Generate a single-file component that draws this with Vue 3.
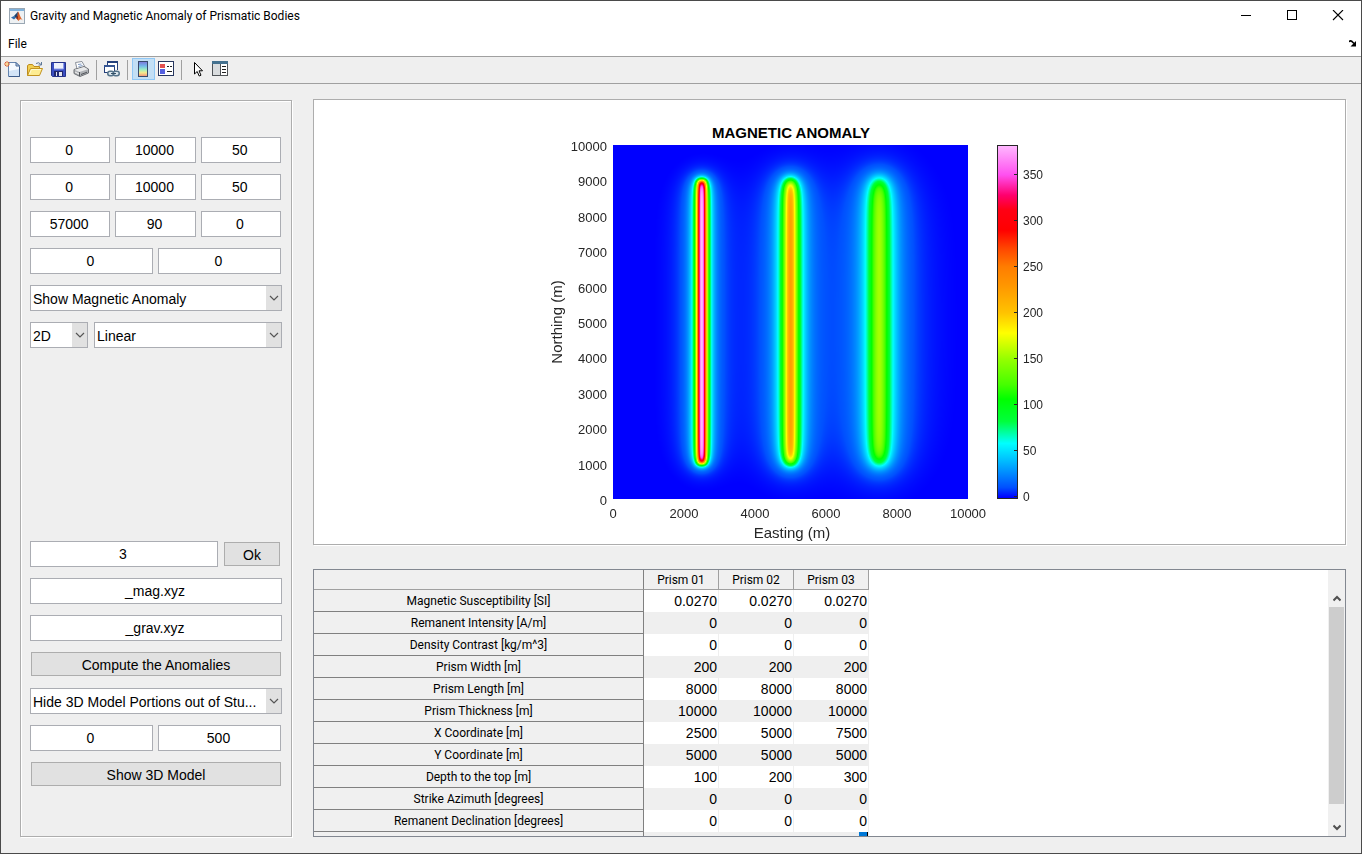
<script setup>
import { onMounted, ref } from 'vue'

const gridRows = [
  { key: 'x', label: 'Easting', values: ['0', '10000', '50'] },
  { key: 'y', label: 'Northing', values: ['0', '10000', '50'] },
  { key: 'f', label: 'Field', values: ['57000', '90', '0'] }
]

const prisms = [
  { name: 'Prism 01', x: 2500, depth: 100 },
  { name: 'Prism 02', x: 5000, depth: 200 },
  { name: 'Prism 03', x: 7500, depth: 300 }
]

const rows = [
  ['Magnetic Susceptibility [SI]', '0.0270', '0.0270', '0.0270'],
  ['Remanent Intensity [A/m]', '0', '0', '0'],
  ['Density Contrast [kg/m^3]', '0', '0', '0'],
  ['Prism Width [m]', '200', '200', '200'],
  ['Prism Length [m]', '8000', '8000', '8000'],
  ['Prism Thickness [m]', '10000', '10000', '10000'],
  ['X Coordinate [m]', '2500', '5000', '7500'],
  ['Y Coordinate [m]', '5000', '5000', '5000'],
  ['Depth to the top [m]', '100', '200', '300'],
  ['Strike Azimuth [degrees]', '0', '0', '0'],
  ['Remanent Declination [degrees]', '0', '0', '0'],
  ['', '', '', '']
]

const yTicks = Array.from({ length: 11 }, (_, i) => i * 1000)
const xTicks = Array.from({ length: 6 }, (_, i) => i * 2000)
const barTicks = [0, 50, 100, 150, 200, 250, 300, 350]
const LOW = -2
const HIGH = 382

const stops = [
  [-2, 0, 0, 255],
  [-1, 0, 0, 255],
  [10, 0, 80, 255],
  [22, 0, 125, 255],
  [38, 0, 185, 255],
  [58, 0, 255, 255],
  [82, 0, 255, 60],
  [106, 0, 255, 0],
  [122, 70, 255, 0],
  [150, 150, 255, 0],
  [178, 255, 255, 0],
  [200, 255, 195, 0],
  [230, 255, 150, 0],
  [250, 255, 125, 0],
  [270, 255, 70, 0],
  [290, 255, 0, 0],
  [312, 255, 0, 20],
  [328, 255, 0, 110],
  [350, 255, 80, 240],
  [382, 255, 185, 255]
]

function colour(v) {
  let i = 1
  while (i < stops.length - 1 && v > stops[i][0]) i++
  const a = stops[i - 1]
  const b = stops[i]
  const t = Math.min(1, Math.max(0, (v - a[0]) / (b[0] - a[0])))
  return [1, 2, 3].map((k) => Math.round(a[k] + (b[k] - a[k]) * t))
}

// Solid angle of a horizontal rectangle seen from the surface point (x, y)
function solid(x, y, cx, z) {
  let sum = 0
  for (const sx of [-1, 1]) {
    for (const sy of [-1, 1]) {
      const dx = cx + sx * 100 - x
      const dy = 5000 + sy * 4000 - y
      sum += sx * sy * Math.atan((dx * dy) / (z * Math.hypot(dx, dy, z)))
    }
  }
  return sum
}

function anomaly(x, y) {
  const c = (0.027 * 57000) / (4 * Math.PI)
  return prisms.reduce((s, p) => s + c * (solid(x, y, p.x, p.depth) - solid(x, y, p.x, p.depth + 10000)), 0)
}

const canvas = ref(null)
onMounted(() => {
  const el = canvas.value
  const ctx = el.getContext('2d')
  const img = ctx.createImageData(el.width, el.height)
  for (let j = 0; j < el.height; j++) {
    for (let i = 0; i < el.width; i++) {
      const x = ((i + 0.5) / el.width) * 10000
      const y = ((el.height - j - 0.5) / el.height) * 10000
      const k = (j * el.width + i) * 4
      const c = colour(anomaly(x, y))
      img.data[k] = c[0]
      img.data[k + 1] = c[1]
      img.data[k + 2] = c[2]
      img.data[k + 3] = 255
    }
  }
  ctx.putImageData(img, 0, 0)
})

const barY = (v) => 398 - Math.round(((v - LOW) / (HIGH - LOW)) * 353)
const barOffset = (v) => (v - LOW) / (HIGH - LOW)
</script>

<template>
  <div class="window">
    <header class="titlebar">
      <svg class="app-icon" width="16" height="16" viewBox="0 0 16 16" aria-hidden="true">
        <rect x="0.5" y="0.5" width="15" height="15" fill="#eef1f3" stroke="#9aa7b3" />
        <rect x="1" y="1" width="14" height="2" fill="#7fb2dc" />
        <path d="M2 9.500 L5 8 L7 9.800 L5 11.500 Z" fill="#2f6fb0" />
        <path d="M5 8 L9 3.500 L8.500 8.500 L7 10 Z" fill="#1d4470" />
        <path d="M9 3.500 C10.500 5 11 9.500 14 12.500 C12 10.800 11 11 9.500 13 C8.500 12 8 10.500 7 10 L8.500 8 Z" fill="#e0662a" />
        <path d="M9 3.500 C9.600 6 9 9.500 8.500 12 C8 11 7.500 10.300 7 10 L8.500 8 Z" fill="#7d1f16" />
      </svg>
      <h1>Gravity and Magnetic Anomaly of Prismatic Bodies</h1>
      <div class="win-buttons">
        <button type="button" aria-label="Minimize">
          <svg width="12" height="12" viewBox="0 0 12 12"><path d="M1 5.500 H11" stroke="#000" fill="none" /></svg>
        </button>
        <button type="button" aria-label="Maximize">
          <svg width="12" height="12" viewBox="0 0 12 12"><rect x="1.500" y="0.500" width="9" height="9" stroke="#000" fill="none" /></svg>
        </button>
        <button type="button" aria-label="Close">
          <svg width="12" height="12" viewBox="0 0 12 12"><path d="M1 0 L11 10 M11 0 L1 10" stroke="#000" stroke-width="1.100" fill="none" /></svg>
        </button>
      </div>
    </header>

    <nav class="menubar">
      <button type="button">File</button>
      <svg width="8" height="8" viewBox="0 0 8 8" aria-hidden="true">
        <path d="M0 2 Q1 0 3 1.500 L5 3.500" stroke="#000" stroke-width="1.600" fill="none" />
        <path d="M7 1 V6.500 H1.500 Z" fill="#000" />
      </svg>
    </nav>

    <div class="toolbar">
      <button type="button" aria-label="New figure">
        <svg width="16" height="16" viewBox="0 0 16 16">
          <path d="M4.500 1.500 H12 L15.500 5 V15.500 H4.500 Z" fill="#f4f9ff" stroke="#6484ae" />
          <path d="M5 10 L15 8 V15 H5 Z" fill="#d3e4f7" />
          <path d="M12 1.500 V5 H15.500 Z" fill="#b9cfe9" stroke="#4a6b98" />
          <path d="M15.500 6 V15.500 H5" stroke="#3d5c8b" fill="none" />
          <path d="M3 0 V6 M0 3 H6 M1 1 L5 5 M5 1 L1 5" stroke="#e0622e" />
          <circle cx="3" cy="3" r="1.300" fill="#ffd98a" />
        </svg>
      </button>
      <button type="button" aria-label="Open file">
        <svg width="16" height="16" viewBox="0 0 16 16">
          <path d="M9 2.500 Q12 0.500 14 3.500 M14.500 1 V4 H11.500" stroke="#5c7798" fill="none" />
          <path d="M0.500 14.500 V4.500 L2 3.500 H5.500 L7 5.500 H12.500 V8" fill="#f2cf52" stroke="#bd8b1d" />
          <path d="M0.500 14.500 L3.500 7.500 H15.500 L12.500 14.500 Z" fill="#fdec92" stroke="#c2921f" />
          <path d="M2.500 13 L4.500 8.500 H14" stroke="#fffad0" fill="none" />
        </svg>
      </button>
      <button type="button" aria-label="Save figure">
        <svg width="16" height="16" viewBox="0 0 16 16">
          <path d="M1.500 1.500 H15.500 V15.500 H2.500 L1.500 14.500 Z" fill="#3b4fc2" stroke="#26338a" />
          <rect x="4" y="2" width="9" height="6" fill="#eef1fb" />
          <path d="M13.500 2 V8 H4" stroke="#8d9ce8" fill="none" />
          <rect x="4" y="10" width="9" height="5" fill="#20276a" />
          <rect x="6" y="11" width="6" height="4" fill="#e4e6f0" />
          <rect x="7" y="11" width="2" height="4" fill="#252c76" />
        </svg>
      </button>
      <button type="button" aria-label="Print figure">
        <svg width="16" height="16" viewBox="0 0 16 16">
          <path d="M4 8 L2.500 1.500 L9 0.500 L12 6 Z" fill="#fff" stroke="#8a9099" />
          <path d="M5 3.500 L8.500 3 M5.500 5.500 L9.500 4.500" stroke="#7e9ac4" />
          <path d="M1 8.500 L11 5.500 L15.500 8 V12 L7 15.500 L1 12.500 Z" fill="#aeb1b5" stroke="#6c7075" />
          <path d="M1.500 8.700 L11 6 L15 8.200 L6.500 11 Z" fill="#e8e9ea" />
          <path d="M6.500 11 V15 M8 13.500 L14 11.200" stroke="#505358" />
          <path d="M2 11 L6 13" stroke="#f2f2f2" />
        </svg>
      </button>
      <span class="sep"></span>
      <button type="button" aria-label="Link plot">
        <svg width="16" height="16" viewBox="0 0 16 16">
          <path d="M3.500 6 V0.500 H13.500 V9" fill="#fff" stroke="#24407c" />
          <rect x="3" y="0" width="11" height="2" fill="#24407c" />
          <rect x="0.500" y="4.500" width="10" height="7" fill="#fff" stroke="#24407c" />
          <rect x="0" y="4" width="11" height="2" fill="#355594" />
          <rect x="3.750" y="10.250" width="6" height="4.500" rx="2.200" fill="#dce7ee" stroke="#55738a" stroke-width="1.500" />
          <rect x="9.250" y="10.250" width="6" height="4.500" rx="2.200" fill="#dce7ee" stroke="#55738a" stroke-width="1.500" />
          <path d="M7 12.500 H12" stroke="#334f66" />
        </svg>
      </button>
      <span class="sep"></span>
      <button type="button" class="active" aria-label="Insert colorbar">
        <svg width="16" height="16" viewBox="0 0 16 16">
          <defs>
            <linearGradient id="mini" x1="0" y1="0" x2="0" y2="1">
              <stop offset="0" stop-color="#7d73d8" />
              <stop offset="0.300" stop-color="#72b9ea" />
              <stop offset="0.550" stop-color="#9ff0c0" />
              <stop offset="0.750" stop-color="#f5e98c" />
              <stop offset="1" stop-color="#f28d7c" />
            </linearGradient>
          </defs>
          <rect x="3.500" y="0.500" width="9" height="15" fill="url(#mini)" stroke="#374a6b" />
        </svg>
      </button>
      <button type="button" aria-label="Insert legend">
        <svg width="16" height="16" viewBox="0 0 16 16">
          <rect x="0.500" y="0.500" width="15" height="14" fill="#fff" stroke="#27365f" />
          <rect x="2" y="3" width="5" height="4" fill="#e4504f" />
          <rect x="2" y="8" width="5" height="5" fill="#5560e0" />
          <path d="M9 5.500 H11 M12 5.500 H14 M9 10.500 H14" stroke="#222" />
        </svg>
      </button>
      <span class="sep"></span>
      <button type="button" aria-label="Edit plot">
        <svg width="16" height="16" viewBox="0 0 16 16">
          <path d="M5.500 1.500 V13 L8.200 10.500 L10.200 15 L12 14.200 L10 9.800 H13.500 Z" fill="#fff" stroke="#000" />
        </svg>
      </button>
      <button type="button" aria-label="Property inspector">
        <svg width="16" height="16" viewBox="0 0 16 16">
          <rect x="0.500" y="1.500" width="15" height="13" fill="#fff" stroke="#4f5357" />
          <rect x="0" y="0" width="16" height="3" fill="#44718f" />
          <rect x="1" y="3" width="7" height="11" fill="#d9dcde" />
          <path d="M8.500 3 V14" stroke="#4f5357" />
          <path d="M10 5.500 H14 M10 8.500 H14 M10 11.500 H14" stroke="#222" />
        </svg>
      </button>
    </div>

    <main class="content">
      <form class="panel controls" @submit.prevent>
        <div class="group">
          <div v-for="r in gridRows" :key="r.key" class="row three">
            <input v-for="(v, i) in r.values" :key="i" type="text" :value="v" :aria-label="r.label + ' ' + (i + 1)" />
          </div>
          <div class="row two">
            <input type="text" value="0" aria-label="Remanent declination" />
            <input type="text" value="0" aria-label="Remanent inclination" />
          </div>
          <div class="row">
            <div class="select">
              <select aria-label="Anomaly"><option>Show Magnetic Anomaly</option></select>
              <span class="arrow"><svg width="10" height="6" viewBox="0 0 10 6"><path d="M1 1 L5 5 L9 1" fill="none" stroke="#555" stroke-width="1.200" /></svg></span>
            </div>
          </div>
          <div class="row view">
            <div class="select">
              <select aria-label="View"><option>2D</option></select>
              <span class="arrow"><svg width="10" height="6" viewBox="0 0 10 6"><path d="M1 1 L5 5 L9 1" fill="none" stroke="#555" stroke-width="1.200" /></svg></span>
            </div>
            <div class="select">
              <select aria-label="Scale"><option>Linear</option></select>
              <span class="arrow"><svg width="10" height="6" viewBox="0 0 10 6"><path d="M1 1 L5 5 L9 1" fill="none" stroke="#555" stroke-width="1.200" /></svg></span>
            </div>
          </div>
        </div>

        <div class="group">
          <div class="row count">
            <input type="text" value="3" aria-label="Number of prisms" />
            <button type="button">Ok</button>
          </div>
          <div class="row"><input type="text" value="_mag.xyz" aria-label="Magnetic output file" /></div>
          <div class="row"><input type="text" value="_grav.xyz" aria-label="Gravity output file" /></div>
          <div class="row action"><button type="button">Compute the Anomalies</button></div>
          <div class="row">
            <div class="select">
              <select aria-label="Model portions"><option>Hide 3D Model Portions out of Stu...</option></select>
              <span class="arrow"><svg width="10" height="6" viewBox="0 0 10 6"><path d="M1 1 L5 5 L9 1" fill="none" stroke="#555" stroke-width="1.200" /></svg></span>
            </div>
          </div>
          <div class="row two">
            <input type="text" value="0" aria-label="Minimum depth" />
            <input type="text" value="500" aria-label="Maximum depth" />
          </div>
          <div class="row action"><button type="button">Show 3D Model</button></div>
        </div>
      </form>

      <section class="panel plot">
        <svg class="chart" width="571" height="444" viewBox="0 0 571 444">
          <defs>
            <linearGradient id="bar" x1="0" y1="1" x2="0" y2="0">
              <stop
                v-for="s in stops"
                :key="s[0]"
                :offset="barOffset(s[0])"
                :stop-color="`rgb(${s[1]},${s[2]},${s[3]})`"
              />
            </linearGradient>
          </defs>
          <text class="chart-title" x="247" y="38">MAGNETIC ANOMALY</text>
          <foreignObject x="69" y="45" width="355" height="354">
            <canvas ref="canvas" width="355" height="354"></canvas>
          </foreignObject>
          <text v-for="t in yTicks" :key="'y' + t" class="tick end" x="63" :y="405 - Math.round(t * 0.0354)">{{ t }}</text>
          <text v-for="t in xTicks" :key="'x' + t" class="tick mid" :x="69 + Math.round(t * 0.0355)" y="418">{{ t }}</text>
          <text class="axis" x="248" y="438">Easting (m)</text>
          <text class="axis" transform="translate(18 222) rotate(-90)">Northing (m)</text>
          <rect x="453.500" y="45.500" width="20" height="353" fill="url(#bar)" stroke="#262626" />
          <g v-for="t in barTicks" :key="'b' + t">
            <path :d="`M470 ${barY(t) + 0.5} H474`" stroke="#262626" />
            <text class="bar-tick" x="479" :y="barY(t) + 5">{{ t }}</text>
          </g>
        </svg>
      </section>

      <section class="sheet">
        <div class="sheet-view">
          <table>
            <thead>
              <tr>
                <th class="corner"></th>
                <th v-for="p in prisms" :key="p.name" scope="col">{{ p.name }}</th>
              </tr>
            </thead>
            <tbody>
              <tr v-for="(r, i) in rows" :key="i">
                <th scope="row">{{ r[0] }}</th>
                <td v-for="c in 3" :key="c">
                  {{ r[c] }}<span v-if="i === 11 && c === 3" class="cell-mark"></span>
                </td>
              </tr>
            </tbody>
          </table>
        </div>
        <div class="scroll">
          <button type="button" aria-label="Scroll up">
            <svg width="8" height="7" viewBox="0 0 8 7"><path d="M0.500 5.500 L4 2 L7.500 5.500" fill="none" stroke="#505050" stroke-width="2" /></svg>
          </button>
          <div class="track"><div class="thumb"></div></div>
          <button type="button" aria-label="Scroll down">
            <svg width="8" height="7" viewBox="0 0 8 7"><path d="M0.500 1.500 L4 5 L7.500 1.500" fill="none" stroke="#505050" stroke-width="2" /></svg>
          </button>
        </div>
      </section>
    </main>
  </div>
</template>

<style>
body {
  margin: 0;
}
</style>

<style scoped>
* {
  box-sizing: border-box;
}
.window {
  min-height: 100vh;
  display: flex;
  flex-direction: column;
  border: 1px solid #4a4a4a;
  background: #efefef;
  color: #000;
  font: 14px "Liberation Sans", Arial, sans-serif;
}
button {
  font: inherit;
  color: inherit;
  padding: 0;
}
.titlebar {
  display: flex;
  align-items: center;
  height: 30px;
  padding-left: 8px;
  gap: 5px;
  background: #fff;
}
h1 {
  flex: 1;
  margin: 0;
  font: 12px Roboto, "Noto Sans", sans-serif;
}
.win-buttons {
  display: flex;
}
.win-buttons button {
  display: flex;
  align-items: center;
  justify-content: center;
  width: 46px;
  height: 30px;
  border: 0;
  background: none;
}
.menubar {
  display: flex;
  align-items: center;
  justify-content: space-between;
  height: 25px;
  padding: 0 4px 0 7px;
  background: #fff;
  font: 12px Roboto, "Noto Sans", sans-serif;
}
.menubar button {
  border: 0;
  background: none;
}
.toolbar {
  display: flex;
  align-items: flex-start;
  height: 28px;
  padding-top: 1px;
  border-top: 1px solid #a0a0a0;
  border-bottom: 1px solid #a0a0a0;
}
.toolbar button {
  display: flex;
  align-items: center;
  width: 23px;
  height: 22px;
  padding-left: 2px;
  border: 1px solid transparent;
  background: none;
}
.toolbar .active {
  border-color: #90c8f6;
  background: #c3dff5;
}
.sep {
  width: 1px;
  height: 20px;
  margin: 2px 4px 0 3px;
  background: #a0a0a0;
}
.content {
  flex: 1;
  display: grid;
  grid-template-columns: 272px minmax(0, 1fr);
  grid-template-rows: minmax(446px, 1fr) 268px;
  column-gap: 21px;
  row-gap: 24px;
  padding: 15px 15px 16px 19px;
}
.panel {
  border: 1px solid #adadad;
  box-shadow: inset 1px 1px #fff, 1px 1px #fff;
}
.controls {
  grid-row: 1 / 3;
  display: flex;
  flex-direction: column;
  justify-content: space-between;
  margin-top: 1px;
  padding: 36px 9px 49px;
}
.group {
  display: grid;
  gap: 11px;
}
.row {
  display: grid;
  height: 26px;
}
.three,
.two,
.count {
  gap: 5px;
  margin-right: 1px;
}
.three {
  grid-template-columns: repeat(3, minmax(0, 1fr));
}
.two {
  grid-template-columns: repeat(2, minmax(0, 1fr));
}
.view {
  grid-template-columns: 58px minmax(0, 1fr);
  gap: 6px;
}
.count {
  grid-template-columns: minmax(0, 1fr) 58px;
}
.action {
  height: 24px;
  margin-bottom: 1px;
}
input,
select {
  width: 100%;
  height: 26px;
  margin: 0;
  border: 1px solid #abadb3;
  border-radius: 0;
  background: #fff;
  color: #000;
  font: 14px "Liberation Sans", Arial, sans-serif;
}
input {
  padding: 0 2px 1px 0;
  text-align: center;
}
.row > button {
  height: 24px;
  margin: 1px;
  padding-top: 2px;
  border: 1px solid #adadad;
  background: #e1e1e1;
}
.action > button {
  margin: 0 1px;
}
.select {
  position: relative;
}
select {
  appearance: none;
  padding: 1px 17px 0 2px;
}
.arrow {
  position: absolute;
  top: 1px;
  right: 1px;
  display: flex;
  align-items: center;
  justify-content: center;
  width: 15px;
  height: 24px;
  background: #e1e1e1;
  pointer-events: none;
}
.plot {
  display: flex;
  justify-content: center;
  background: #fff;
}
canvas {
  display: block;
}
.chart text {
  font-family: "Liberation Sans", Arial, sans-serif;
  fill: #262626;
}
.chart .chart-title {
  font-size: 15px;
  font-weight: 700;
  text-anchor: middle;
  fill: #000;
}
.chart .axis {
  font-size: 15px;
  text-anchor: middle;
}
.tick {
  font-size: 13px;
}
.end {
  text-anchor: end;
}
.mid {
  text-anchor: middle;
}
.bar-tick {
  font-size: 12px;
}
.sheet {
  display: flex;
  border: 1px solid #828790;
  background: #fff;
  overflow: hidden;
}
.sheet-view {
  flex: 1;
  height: 266px;
  overflow: hidden;
}
table {
  border-collapse: separate;
  border-spacing: 0;
  table-layout: fixed;
  width: 555px;
}
th {
  width: 75px;
  height: 22px;
  padding: 2px 0 0;
  border-right: 1px solid #a0a0a0;
  border-bottom: 1px solid #a0a0a0;
  background: #f0f0f0;
  font: 12px/19px Roboto, "Noto Sans", sans-serif;
  text-align: center;
}
thead th {
  height: 20px;
  line-height: 17px;
}
.corner {
  width: 330px;
  border-right-color: #808080;
}
tbody th {
  border-color: #808080;
}
td {
  position: relative;
  height: 22px;
  padding: 0 1px 0 0;
  border-right: 1px solid #efefef;
  font-size: 14px;
  line-height: 20px;
  text-align: right;
}
tbody tr:nth-child(even) td {
  background: #efefef;
}
.cell-mark {
  position: absolute;
  top: 0;
  right: 0;
  width: 9px;
  height: 22px;
  border-right: 1px solid #000;
  background: #0078d7;
}
.scroll {
  display: flex;
  flex-direction: column;
  width: 17px;
  padding: 20px 1px 0;
  background: #f0f0f0;
}
.scroll button {
  display: flex;
  align-items: center;
  justify-content: center;
  height: 17px;
  border: 0;
  background: none;
}
.track {
  flex: 1;
}
.thumb {
  height: 93%;
  background: #cdcdcd;
}
</style>
